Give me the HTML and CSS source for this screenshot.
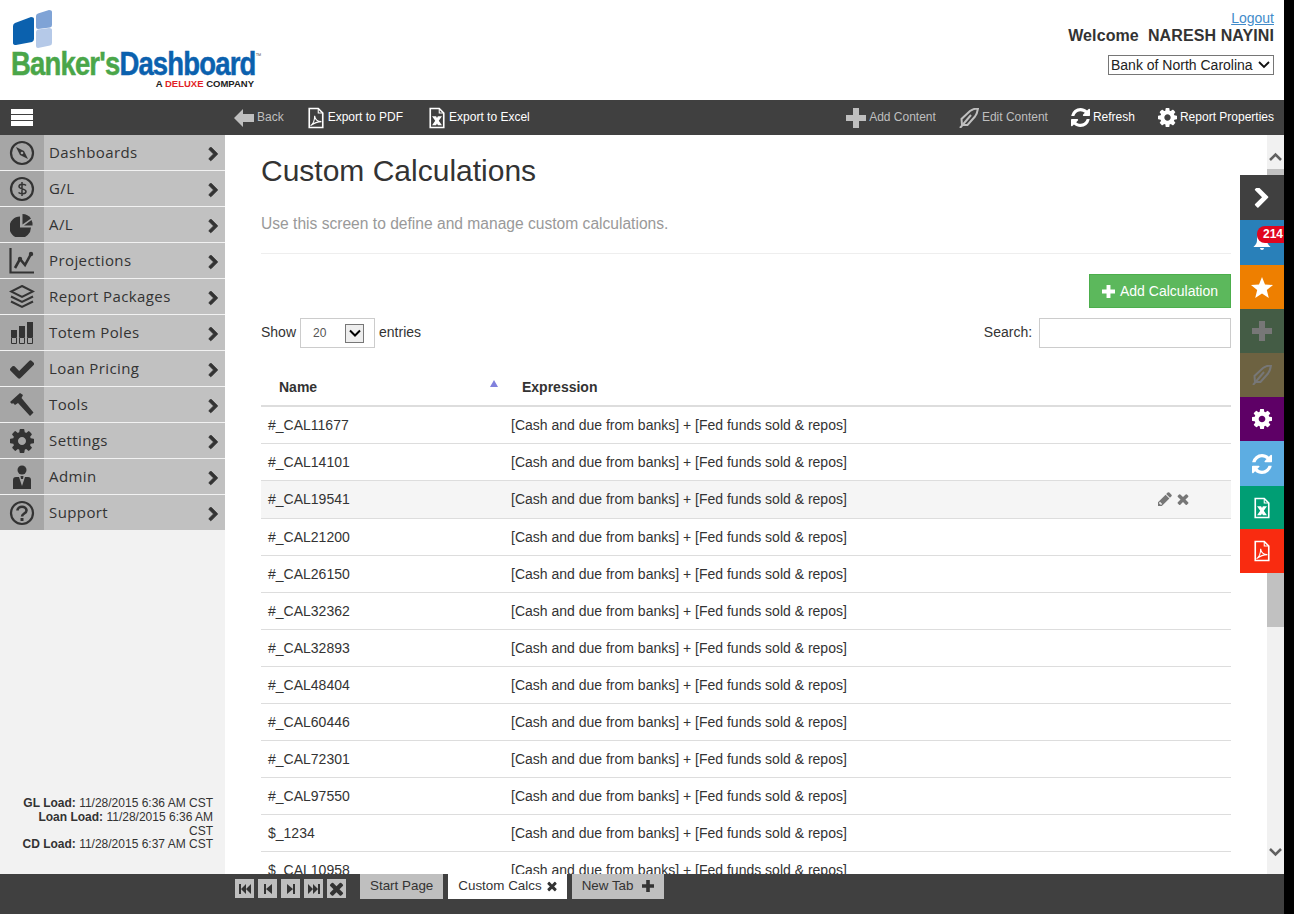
FILE: index.html
```html
<!DOCTYPE html>
<html lang="en">
<head>
    <meta charset="UTF-8">
    <title>Custom Calculations - Banker's Dashboard</title>
    <link rel="stylesheet" href="styles.css">
</head>
<body>

<svg class="defs" width="0" height="0">
    <symbol id="i-chevron" viewBox="128 128 1536 1536"><path d="M1363 877l-742 742q-19 19-45 19t-45-19l-166-166q-19-19-19-45t19-45l531-531-531-531q-19-19-19-45t19-45l166-166q19-19 45-19t45 19l742 742q19 19 19 45t-19 45z"/></symbol>
    <symbol id="i-times" viewBox="128 128 1536 1536"><path d="M1490 1322q0 40-28 68l-136 136q-28 28-68 28t-68-28l-294-294-294 294q-28 28-68 28t-68-28l-136-136q-28-28-28-68t28-68l294-294-294-294q-28-28-28-68t28-68l136-136q28-28 68-28t68 28l294 294 294-294q28-28 68-28t68 28l136 136q28 28 28 68t-28 68l-294 294 294 294q28 28 28 68z"/></symbol>
    <symbol id="i-gear" viewBox="128 128 1536 1536"><path d="M1152 896q0-106-75-181t-181-75-181 75-75 181 75 181 181 75 181-75 75-181zm512-109v222q0 12-8 23t-20 13l-185 28q-19 54-39 91 35 50 107 138 10 12 10 25t-9 23q-27 37-99 108t-94 71q-12 0-26-9l-138-108q-44 23-91 38-16 136-29 186-7 28-36 28h-222q-14 0-24.500-8.500t-11.500-21.500l-28-184q-49-16-90-37l-141 107q-10 9-25 9-14 0-25-11-126-114-165-168-7-10-7-23 0-12 8-23 15-21 51-66.500t54-70.500q-27-50-41-99l-183-27q-13-2-21-12.500t-8-23.500v-222q0-12 8-23t19-13l186-28q14-46 39-92-40-57-107-138-10-12-10-24 0-10 9-23 26-36 98.500-107.500t94.500-71.500q13 0 26 10l138 107q44-23 91-38 16-136 29-186 7-28 36-28h222q14 0 24.500 8.500t11.500 21.500l28 184q49 16 90 37l142-107q9-9 24-9 13 0 25 10 129 119 165 170 7 8 7 22 0 12-8 23-15 21-51 66.500t-54 70.500q26 50 41 98l183 28q13 2 21 12.500t8 23.500z"/></symbol>
    <symbol id="i-refresh" viewBox="128 128 1536 1536"><path d="M1639 1056q0 5-1 7-64 268-268 434.500t-478 166.500q-146 0-282.500-55t-243.500-157l-129 129q-19 19-45 19t-45-19-19-45v-448q0-26 19-45t45-19h448q26 0 45 19t19 45-19 45l-137 137q71 66 161 102t187 36q134 0 250-65t186-179q11-17 53-117 8-23 30-23h192q13 0 22.500 9.500t9.500 22.500zm25-800v448q0 26-19 45t-45 19h-448q-26 0-45-19t-19-45 19-45l138-138q-148-137-349-137-134 0-250 65t-186 179q-11 17-53 117-8 23-30 23h-199q-13 0-22.500-9.500t-9.500-22.500v-7q65-268 270-434.500t480-166.500q146 0 284 55.500t245 156.500l130-129q19-19 45-19t45 19 19 45z"/></symbol>
    <symbol id="i-plus" viewBox="0 0 20 20"><path d="M7 0h6v7h7v6h-7v7H7v-7H0V7h7z"/></symbol>
    <symbol id="i-quill" viewBox="0 0 20 20"><g fill="none" stroke="currentColor" stroke-width="2"><path d="M3 17l-.5-6L11 3c2-1.500 5-2.500 8-2.500-.5 3-1.500 6-3 8l-7.500 8.500z"/><path d="M1 20L12 7"/></g></symbol>
    <symbol id="i-pdf" viewBox="0 0 20 24"><path d="M2.500 1.500h10l5 5v16h-15z" fill="none" stroke="currentColor" stroke-width="1.800"/><path d="M12.500 1.500v5h5" fill="none" stroke="currentColor" stroke-width="1.200"/><path d="M4 20.500c3-2 4.500-6 4.500-11 .5 4 3.500 6.500 7.500 6.500-4 0-8 1.500-12 4.500z" fill="none" stroke="currentColor" stroke-width="1.200"/></symbol>
    <symbol id="i-xls" viewBox="0 0 20 24"><path d="M2.500 1.500h10l5 5v16h-15z" fill="none" stroke="currentColor" stroke-width="1.800"/><path d="M12.500 1.500v5h5" fill="none" stroke="currentColor" stroke-width="1.200"/><path d="M4.500 10H9l1 2 1-2h4.500L12 15l3.500 5H11l-1-2-1 2H4.500L8 15z" fill="currentColor"/></symbol>
    <symbol id="i-pencil" viewBox="128 128 1536 1536"><path d="M491 1536l91-91-235-235-91 91v107h128v128h107zm469-1120l416 416-832 832h-416v-416zm683 96q0 53-37 90l-166 166-416-416 166-165q36-38 90-38 53 0 91 38l235 234q37 39 37 91z"/></symbol>
</svg>

<div class="app">

    <header class="top">
        <div class="logo">
            <svg class="logo-mark" width="42" height="42" viewBox="0 0 42 42">
                <path d="M1 16q0-2 2-3l16-6q3 0 3 2v20q0 2-2 3L4 35q-3 0-3-2z" fill="#0b61ae"/>
                <path d="M24 6q0-2 2-2.500L37 0q3 0 3 2v13q0 2-2 2.500L26 19q-2 0-2-2z" fill="#7fa3d6"/>
                <path d="M24 22q0-2 2-2.500L37 18q3 0 3 2v13q0 2-2 2.500L26 38q-2 0-2-2z" fill="#b5c9e8"/>
            </svg>
            <div class="logo-name"><span class="logo-green">Banker's</span><span class="logo-blue">Dashboard</span><span class="logo-tm">™</span></div>
            <div class="logo-sub">A <span class="logo-deluxe">DELUXE</span> COMPANY</div>
        </div>
        <div class="user-box">
            <a class="logout" href="#">Logout</a>
            <div class="welcome">Welcome&nbsp; NARESH NAYINI</div>
            <select class="bank-select"><option>Bank of North Carolina</option></select>
        </div>
    </header>

    <div class="toolbar">
        <div class="menu-toggle"><span></span><span></span><span></span></div>
        <div class="tool-group">
            <a class="tool muted"><svg width="20" height="18" viewBox="0 0 20 18" fill="currentColor"><path d="M0 9l9-9v5h11v8H9v5z"/></svg>Back</a>
            <a class="tool tool-gap"><svg width="18" height="22"><use href="#i-pdf"/></svg>Export to PDF</a>
            <a class="tool tool-xls"><svg width="18" height="22"><use href="#i-xls"/></svg>Export to Excel</a>
        </div>
        <div class="tool-group">
            <a class="tool muted"><svg width="20" height="20" fill="currentColor"><use href="#i-plus"/></svg>Add Content</a>
            <a class="tool muted tool-gap"><svg width="20" height="20"><use href="#i-quill"/></svg>Edit Content</a>
            <a class="tool tool-gap"><svg width="19" height="19" fill="currentColor"><use href="#i-refresh"/></svg>Refresh</a>
            <a class="tool tool-gap"><svg width="19" height="19" fill="currentColor"><use href="#i-gear"/></svg>Report Properties</a>
        </div>
    </div>

    <div class="middle">
        <aside class="sidebar">
            <ul class="side-menu">
                <li>
                    <span class="side-icon"><svg width="26" height="26" viewBox="0 0 26 26"><circle cx="13" cy="13" r="11" fill="none" stroke="#333" stroke-width="2.200"/><path d="M7 7l8 4 4 8-8-4z" fill="#333"/><circle cx="13" cy="13" r="1.300" fill="#a6a6a6"/></svg></span>
                    <span class="side-label">Dashboards</span>
                    <svg class="side-arrow"><use href="#i-chevron"/></svg>
                </li>
                <li>
                    <span class="side-icon"><svg width="26" height="26" viewBox="0 0 26 26"><circle cx="13" cy="13" r="11" fill="none" stroke="#333" stroke-width="2.200"/><path d="M17 9.500c-1-1.500-7-2-7 1s7 2 7 5-6 2.500-7.500 1M13 6v14" fill="none" stroke="#333" stroke-width="1.500"/></svg></span>
                    <span class="side-label">G/L</span>
                    <svg class="side-arrow"><use href="#i-chevron"/></svg>
                </li>
                <li>
                    <span class="side-icon"><svg width="24" height="24" viewBox="0 0 24 24"><path d="M10 3.500v11h11A10.800 10.800 0 1 1 10 3.500z" fill="#333"/><path d="M12.500 1a11 11 0 0 1 8.500 4.500l-8.500 6z" fill="#333"/><path d="M14 12.500l7.500-5.500a10 10 0 0 1 1 5.500z" fill="#333"/></svg></span>
                    <span class="side-label">A/L</span>
                    <svg class="side-arrow"><use href="#i-chevron"/></svg>
                </li>
                <li>
                    <span class="side-icon"><svg width="26" height="26" viewBox="0 0 26 26"><path d="M1.500 0v24.500H25" fill="none" stroke="#333" stroke-width="2.200"/><path d="M6 20l5-9 5 6 6-11" fill="none" stroke="#333" stroke-width="2.600"/><circle cx="22" cy="6" r="2.200" fill="#333"/><circle cx="11" cy="11" r="2.200" fill="#333"/></svg></span>
                    <span class="side-label">Projections</span>
                    <svg class="side-arrow"><use href="#i-chevron"/></svg>
                </li>
                <li>
                    <span class="side-icon"><svg width="26" height="24" viewBox="0 0 26 24"><g fill="none" stroke="#333" stroke-width="2"><path d="M13 1l11 5.500L13 12 2 6.500z"/><path d="M2 11.500l11 5.500 11-5.500"/><path d="M2 16.500L13 22l11-5.500"/></g></svg></span>
                    <span class="side-label">Report Packages</span>
                    <svg class="side-arrow"><use href="#i-chevron"/></svg>
                </li>
                <li>
                    <span class="side-icon"><svg width="24" height="22" viewBox="0 0 24 22"><g fill="#333"><path d="M1 8h6v7H1zM9 4h6v11H9zM17 0h6v15h-6z"/></g><g fill="none" stroke="#333"><path d="M1.500 15.500h5v6h-5zM9.500 15.500h5v6h-5zM17.500 15.500h5v6h-5z"/></g></svg></span>
                    <span class="side-label">Totem Poles</span>
                    <svg class="side-arrow"><use href="#i-chevron"/></svg>
                </li>
                <li>
                    <span class="side-icon"><svg width="24" height="24" viewBox="128 128 1536 1536" fill="#333"><path d="M1671 566q0 40-28 68l-724 724-136 136q-28 28-68 28t-68-28l-136-136-362-362q-28-28-28-68t28-68l136-136q28-28 68-28t68 28l294 295 656-657q28-28 68-28t68 28l136 136q28 28 28 68z"/></svg></span>
                    <span class="side-label">Loan Pricing</span>
                    <svg class="side-arrow"><use href="#i-chevron"/></svg>
                </li>
                <li>
                    <span class="side-icon"><svg width="24" height="24" viewBox="0 0 24 24"><path d="M0 9L10 0l3 2-1.500 3 12 14.500-3.500 3.500L8 10l-3 2-2-2-1 1z" fill="#333"/></svg></span>
                    <span class="side-label">Tools</span>
                    <svg class="side-arrow"><use href="#i-chevron"/></svg>
                </li>
                <li>
                    <span class="side-icon"><svg width="24" height="24" fill="#333"><use href="#i-gear"/></svg></span>
                    <span class="side-label">Settings</span>
                    <svg class="side-arrow"><use href="#i-chevron"/></svg>
                </li>
                <li>
                    <span class="side-icon"><svg width="20" height="24" viewBox="0 0 20 24"><circle cx="10" cy="5" r="4.500" fill="#333"/><path d="M1 24v-9q0-3 3-3h3l3 9 3-9h3q3 0 3 3v9z" fill="#333"/><path d="M8.500 11h3l-.5 3h-2z" fill="#333"/></svg></span>
                    <span class="side-label">Admin</span>
                    <svg class="side-arrow"><use href="#i-chevron"/></svg>
                </li>
                <li>
                    <span class="side-icon"><svg width="26" height="26" viewBox="0 0 26 26"><circle cx="13" cy="13" r="11" fill="none" stroke="#333" stroke-width="2.200"/><path d="M8.500 10.500c0-5 9-5 9 0 0 3-4.500 3-4.500 6" fill="none" stroke="#333" stroke-width="2.600"/><rect x="11.500" y="18" width="3" height="3" fill="#333"/></svg></span>
                    <span class="side-label">Support</span>
                    <svg class="side-arrow"><use href="#i-chevron"/></svg>
                </li>
            </ul>
            <div class="load-info">
                <div><b>GL Load:</b> 11/28/2015 6:36 AM CST</div>
                <div><b>Loan Load:</b> 11/28/2015 6:36 AM CST</div>
                <div><b>CD Load:</b> 11/28/2015 6:37 AM CST</div>
            </div>
        </aside>

        <main class="content">
            <h1>Custom Calculations</h1>
            <p class="lead">Use this screen to define and manage custom calculations.</p>
            <hr class="rule">
            <div class="actions">
                <a class="btn-add"><svg width="13" height="13" fill="currentColor"><use href="#i-plus"/></svg>Add Calculation</a>
            </div>
            <div class="table-tools">
                <div class="show-box">
                    <span class="show-text">Show</span>
                    <div class="fake-select">
                        <span>20</span>
                        <span class="fake-arrow"><svg width="12" height="8" viewBox="0 0 12 8"><path d="M1 1.500l5 5 5-5" fill="none" stroke="#000" stroke-width="2"/></svg></span>
                    </div>
                    <span class="show-text">entries</span>
                </div>
                <label class="search-box">Search: <input type="text"></label>
            </div>
            <table class="calc-table">
                <thead>
                    <tr>
                        <th class="col-name">Name<span class="sort-up"></span></th>
                        <th>Expression</th>
                        <th class="col-actions"></th>
                    </tr>
                </thead>
                <tbody>
                    <tr><td>#_CAL11677</td><td>[Cash and due from banks] + [Fed funds sold &amp; repos]</td><td></td></tr>
                    <tr><td>#_CAL14101</td><td>[Cash and due from banks] + [Fed funds sold &amp; repos]</td><td></td></tr>
                    <tr class="hover">
                        <td>#_CAL19541</td>
                        <td>[Cash and due from banks] + [Fed funds sold &amp; repos]</td>
                        <td class="row-icons"><svg width="14" height="14" fill="#777"><use href="#i-pencil"/></svg><svg width="14" height="14" fill="#777"><use href="#i-times"/></svg></td>
                    </tr>
                    <tr><td>#_CAL21200</td><td>[Cash and due from banks] + [Fed funds sold &amp; repos]</td><td></td></tr>
                    <tr><td>#_CAL26150</td><td>[Cash and due from banks] + [Fed funds sold &amp; repos]</td><td></td></tr>
                    <tr><td>#_CAL32362</td><td>[Cash and due from banks] + [Fed funds sold &amp; repos]</td><td></td></tr>
                    <tr><td>#_CAL32893</td><td>[Cash and due from banks] + [Fed funds sold &amp; repos]</td><td></td></tr>
                    <tr><td>#_CAL48404</td><td>[Cash and due from banks] + [Fed funds sold &amp; repos]</td><td></td></tr>
                    <tr><td>#_CAL60446</td><td>[Cash and due from banks] + [Fed funds sold &amp; repos]</td><td></td></tr>
                    <tr><td>#_CAL72301</td><td>[Cash and due from banks] + [Fed funds sold &amp; repos]</td><td></td></tr>
                    <tr><td>#_CAL97550</td><td>[Cash and due from banks] + [Fed funds sold &amp; repos]</td><td></td></tr>
                    <tr><td>$_1234</td><td>[Cash and due from banks] + [Fed funds sold &amp; repos]</td><td></td></tr>
                    <tr><td>$_CAL10958</td><td>[Cash and due from banks] + [Fed funds sold &amp; repos]</td><td></td></tr>
                </tbody>
            </table>
        </main>

        <div class="scrollbar">
            <svg class="scroll-btn" width="17" height="12" viewBox="0 0 17 12"><path d="M3 9l5.500-5.500L14 9" fill="none" stroke="#606060" stroke-width="2.500"/></svg>
            <div class="scroll-track"><div class="scroll-thumb"></div></div>
            <svg class="scroll-btn" width="17" height="12" viewBox="0 0 17 12"><path d="M3 3l5.500 5.500L14 3" fill="none" stroke="#606060" stroke-width="2.500"/></svg>
        </div>

        <!-- floating quick panel, sits over the scrollbar -->
        <div class="quick-panel">
            <div class="quick q-dark"><svg width="20" height="20" fill="#fff"><use href="#i-chevron"/></svg></div>
            <div class="quick q-blue">
                <svg class="bell" width="18" height="18" viewBox="0 0 18 18" fill="#fff"><path d="M9 1c4 0 5 3 5 6 0 4 2 5 3.500 7H.5C2 12 4 11 4 7c0-3 1-6 5-6zM7 15h4c0 1-1 2-2 2s-2-1-2-2z"/></svg>
                <span class="badge">214</span>
            </div>
            <div class="quick q-orange"><svg width="22" height="21" viewBox="0 0 22 21" fill="#fff"><path d="M11 0l3 7.500 8 .5-6.200 5 2 8L11 16.500 4.200 21l2-8L0 8l8-.5z"/></svg></div>
            <div class="quick q-green"><svg width="20" height="20" fill="#777"><use href="#i-plus"/></svg></div>
            <div class="quick q-olive"><svg width="20" height="20"><use href="#i-quill"/></svg></div>
            <div class="quick q-purple"><svg width="20" height="20" fill="#fff"><use href="#i-gear"/></svg></div>
            <div class="quick q-sky"><svg width="20" height="20" fill="#fff"><use href="#i-refresh"/></svg></div>
            <div class="quick q-teal"><svg width="18" height="22"><use href="#i-xls"/></svg></div>
            <div class="quick q-red"><svg width="18" height="22"><use href="#i-pdf"/></svg></div>
        </div>
    </div>

    <footer class="tabbar">
        <div class="tab-nav">
            <span class="nav-btn"><svg width="12" height="10" viewBox="0 0 12 10"><path d="M0 0h2v10H0zM7 0v10L2 5zM12 0v10L7 5z"/></svg></span>
            <span class="nav-btn"><svg width="8" height="10" viewBox="0 0 8 10"><path d="M0 0h2v10H0zM8 0v10L2 5z"/></svg></span>
            <span class="nav-btn"><svg width="8" height="10" viewBox="0 0 8 10"><path d="M6 0h2v10H6zM0 0v10l6-5z"/></svg></span>
            <span class="nav-btn"><svg width="12" height="10" viewBox="0 0 12 10"><path d="M10 0h2v10h-2zM0 0v10l5-5zM5 0v10l5-5z"/></svg></span>
            <span class="nav-btn"><svg width="17" height="17"><use href="#i-times"/></svg></span>
        </div>
        <div class="tab">Start Page</div>
        <div class="tab tab-active">Custom Calcs<svg class="tab-close" width="12" height="12"><use href="#i-times"/></svg></div>
        <div class="tab">New Tab<svg class="tab-plus" width="12" height="12"><use href="#i-plus"/></svg></div>
    </footer>

</div>

</body>
</html>
```

FILE: styles.css
```css
body {
    margin: 0;
    background-color: #000000;
    color: #333333;
    font-family: "Liberation Sans", Arial, sans-serif;
    font-size: 14px;
}
.defs {
    position: absolute;
}
.app {
    width: 1284px;
    height: 914px;
    background-color: #ffffff;
    display: flex;
    flex-direction: column;
    overflow: hidden;
}

/* header */
.top {
    height: 100px;
    display: flex;
    justify-content: space-between;
    flex-shrink: 0;
}
.logo {
    padding: 10px 0 0 11px;
    width: 250px;
}
.logo-mark {
    display: block;
    margin-left: 1px;
}
.logo-name {
    font-size: 33.5px;
    font-weight: bold;
    line-height: 26px;
    letter-spacing: -1px;
    margin-top: -1px;
    white-space: nowrap;
    transform: scaleX(0.82);
    transform-origin: left top;
    -webkit-text-stroke: 0.5px;
}
.logo-green {
    color: #4aa649;
}
.logo-blue {
    color: #0b61ae;
}
.logo-tm {
    font-size: 7px;
    font-weight: normal;
    letter-spacing: 0;
    color: #666666;
    vertical-align: 17px;
    line-height: 0;
    -webkit-text-stroke: 0;
}
.logo-sub {
    font-size: 9.5px;
    font-weight: bold;
    color: #222222;
    text-align: right;
    margin-top: 1px;
    margin-right: 7px;
    white-space: nowrap;
}
.logo-deluxe {
    color: #e21f26;
}
.user-box {
    padding: 10px 10px 0 0;
    text-align: right;
}
.logout {
    display: block;
    color: #428bca;
    line-height: 16px;
    text-decoration: underline;
}
.welcome {
    font-size: 16px;
    font-weight: bold;
    letter-spacing: 0.1px;
    line-height: 18px;
    margin-top: 1px;
    margin-bottom: 10px;
}
.bank-select {
    width: 166px;
    height: 20px;
    font-family: "Liberation Sans", Arial, sans-serif;
    font-size: 14px;
    color: #222222;
    border: 1px solid #767676;
    border-radius: 0;
    padding: 0 0 0 2px;
    appearance: none;
    background: #ffffff url("data:image/svg+xml,%3Csvg xmlns='http://www.w3.org/2000/svg' width='12' height='8'%3E%3Cpath d='M1 1l5 5 5-5' fill='none' stroke='%23111' stroke-width='1.800'/%3E%3C/svg%3E") no-repeat right 3px center;
}

/* toolbar */
.toolbar {
    height: 35px;
    background-color: #404040;
    display: flex;
    align-items: center;
    flex-shrink: 0;
    padding-right: 10px;
}
.menu-toggle {
    width: 234px;
    padding-left: 11px;
    box-sizing: border-box;
    flex-shrink: 0;
}
.menu-toggle span {
    display: block;
    width: 22px;
    height: 5px;
    background-color: #ffffff;
    margin-bottom: 1px;
}
.tool-group {
    display: flex;
    align-items: center;
}
.tool-group:last-child {
    margin-left: auto;
}
.tool {
    display: flex;
    align-items: center;
    gap: 3px;
    color: #ffffff;
    font-size: 12px;
    line-height: 12px;
    white-space: nowrap;
    padding-bottom: 2px;
}
.tool.muted {
    color: #bfbfbf;
}
.tool svg {
    margin-top: 1px;
    margin-bottom: -1px;
}
.tool-gap {
    margin-left: 23px;
}
.tool-xls {
    margin-left: 25px;
}

/* layout under the toolbar */
.middle {
    flex: 1;
    display: flex;
    min-height: 0;
    position: relative;
}

/* sidebar */
.sidebar {
    width: 225px;
    flex-shrink: 0;
    background-color: #f2f2f2;
    display: flex;
    flex-direction: column;
    justify-content: space-between;
}
.side-menu {
    list-style: none;
    margin: 0;
    padding: 0;
}
.side-menu li {
    height: 35px;
    margin-bottom: 1px;
    background-color: #c1c1c1;
    display: flex;
    align-items: center;
    font-family: "Open Sans", sans-serif;
    font-size: 15px;
    letter-spacing: 0.4px;
}
.side-menu li:last-child {
    margin-bottom: 0;
}
.side-icon {
    width: 44px;
    height: 100%;
    background-color: #a6a6a6;
    display: flex;
    align-items: center;
    justify-content: center;
    flex-shrink: 0;
}
.side-label {
    flex: 1;
    padding-left: 5px;
    padding-bottom: 2px;
}
.side-arrow {
    width: 13px;
    height: 15px;
    fill: #333333;
    stroke: #333333;
    stroke-width: 90;
    margin-right: 5px;
    margin-top: 3px;
}
.load-info {
    font-size: 12px;
    line-height: 13.7px;
    text-align: right;
    padding: 0 12px 22px 12px;
}

/* main content */
.content {
    flex: 1;
    min-width: 0;
    padding: 17px 36px 0 36px;
    overflow: hidden;
}
h1 {
    font-size: 30px;
    font-weight: normal;
    line-height: 38px;
    margin: 0;
}
.lead {
    color: #999999;
    font-size: 15.6px;
    line-height: 20px;
    margin: 24px 0 0 0;
}
.rule {
    border: none;
    border-top: 1px solid #eeeeee;
    margin: 19px 0 20px 0;
}
.actions {
    display: flex;
    justify-content: flex-end;
    height: 34px;
}
.btn-add {
    width: 142px;
    box-sizing: border-box;
    background-color: #5cb85c;
    border: 1px solid #4cae4c;
    color: #ffffff;
    display: flex;
    align-items: center;
    justify-content: center;
    gap: 5px;
}
.table-tools {
    display: flex;
    justify-content: space-between;
    align-items: center;
    height: 30px;
    margin-top: 10px;
}
.show-box {
    display: flex;
    align-items: center;
    gap: 4px;
}
.show-text {
    margin-bottom: 2px;
}
.fake-select {
    width: 75px;
    height: 30px;
    box-sizing: border-box;
    border: 1px solid #cccccc;
    display: flex;
    align-items: center;
    justify-content: space-between;
    padding: 0 10px 0 12px;
    font-size: 12px;
    color: #555555;
}
.fake-arrow {
    width: 19px;
    height: 19px;
    box-sizing: border-box;
    border: 1px solid #777777;
    background-color: #eeeeee;
    display: flex;
    align-items: center;
    justify-content: center;
}
.search-box input {
    width: 192px;
    height: 30px;
    box-sizing: border-box;
    border: 1px solid #cccccc;
    margin-left: 3px;
    vertical-align: middle;
}
.calc-table {
    width: 970px;
    margin-top: 21px;
    border-collapse: collapse;
    table-layout: fixed;
}
.calc-table th {
    text-align: left;
    height: 37px;
    padding: 0 0 0 18px;
    border-bottom: 2px solid #dddddd;
    box-sizing: border-box;
}
.calc-table th.col-name {
    width: 243px;
    position: relative;
}
.col-actions {
    width: 110px;
}
.sort-up {
    position: absolute;
    left: 229px;
    top: 11px;
    border-left: 4px solid transparent;
    border-right: 4px solid transparent;
    border-bottom: 7px solid #8080dd;
}
.calc-table td {
    height: 36px;
    padding: 0 0 0 7px;
    border-bottom: 1px solid #dddddd;
    white-space: nowrap;
}
.calc-table tr.hover td {
    height: 36px;
    padding-bottom: 1px;
    background-color: #f5f5f5;
}
.calc-table tr.hover td.row-icons {
    height: 33px;
    padding-left: 37px;
    padding-bottom: 4px;
}
.row-icons svg {
    margin-right: 4px;
    vertical-align: middle;
}

/* scrollbar */
.scrollbar {
    width: 17px;
    flex-shrink: 0;
    background-color: #f1f1f1;
    display: flex;
    flex-direction: column;
    align-items: center;
    padding: 16px 0 16px 0;
    box-sizing: border-box;
}
.scroll-track {
    flex: 1;
    width: 100%;
    margin-top: 6px;
    margin-bottom: 6px;
}
.scroll-thumb {
    height: 458px;
    background-color: #c1c1c1;
}

/* floating panel */
.quick-panel {
    position: absolute;
    right: 0;
    top: 40px;
    width: 44px;
}
.quick {
    height: 44px;
    display: flex;
    align-items: center;
    justify-content: center;
    position: relative;
    color: #ffffff;
}
.q-dark { background-color: #404040; height: 45px; }
.q-blue { background-color: #2980b9; height: 45px; }
.q-orange { background-color: #ee7f00; }
.q-green { background-color: #445c45; }
.q-olive { background-color: #6d6241; color: #777777; }
.q-purple { background-color: #5e0066; }
.q-sky { background-color: #5dade2; height: 45px; }
.q-teal { background-color: #009e74; height: 43px; }
.q-red { background-color: #f92b10; }
.bell {
    position: absolute;
    left: 13px;
    top: 13px;
}
.badge {
    position: absolute;
    left: 17px;
    top: 6px;
    width: 27px;
    height: 17px;
    box-sizing: border-box;
    padding-left: 6px;
    background-color: #e0061e;
    border-radius: 8px 0 0 8px;
    color: #ffffff;
    font-size: 12px;
    font-weight: bold;
    line-height: 17px;
}

/* tabs */
.tabbar {
    height: 40px;
    background-color: #404040;
    flex-shrink: 0;
    display: flex;
    align-items: flex-start;
    padding-left: 235px;
    position: relative;
}
.tab-nav {
    display: flex;
    gap: 4px;
    margin-top: 5px;
    margin-right: 14px;
}
.nav-btn {
    width: 19px;
    height: 19px;
    background-color: #bfbfbf;
    display: flex;
    align-items: center;
    justify-content: center;
    fill: #333333;
}
.tab {
    height: 25px;
    box-sizing: border-box;
    background-color: #bfbfbf;
    padding: 0 10px 2px 10px;
    margin-right: 5px;
    display: flex;
    align-items: center;
    gap: 4px;
    fill: #333333;
    color: #333333;
    font-size: 13.4px;
}
.tab-active {
    background-color: #ffffff;
}
.tab-close {
    margin-right: -1px;
}
.tab-plus {
    margin-left: 5px;
}
```
